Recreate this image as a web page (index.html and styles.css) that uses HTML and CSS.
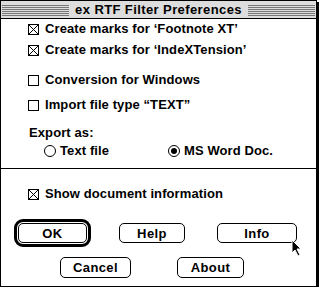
FILE: index.html
```html
<!DOCTYPE html>
<html lang="en">
<head>
    <meta charset="UTF-8">
    <title>ex RTF Filter Preferences</title>
    <link rel="stylesheet" href="styles.css">
</head>
<body>
    <div class="window">
        <!-- title bar -->
        <div class="titlebar">
            <span class="stripes"></span>
            <span class="title">ex RTF Filter Preferences</span>
            <span class="stripes"></span>
        </div>

        <!-- options -->
        <div class="options">
            <div class="row r1">
                <svg class="box" width="11" height="11" viewBox="0 0 11 11"><rect x="0.5" y="0.5" width="10" height="10" fill="#fff" stroke="#000"/><path d="M1 1L10 10M10 1L1 10" stroke="#000" stroke-width="1"/></svg>
                <span>Create marks for ‘Footnote XT’</span>
            </div>
            <div class="row r2">
                <svg class="box" width="11" height="11" viewBox="0 0 11 11"><rect x="0.5" y="0.5" width="10" height="10" fill="#fff" stroke="#000"/><path d="M1 1L10 10M10 1L1 10" stroke="#000" stroke-width="1"/></svg>
                <span>Create marks for ‘IndeXTension’</span>
            </div>
            <div class="row r3">
                <svg class="box" width="11" height="11" viewBox="0 0 11 11"><rect x="0.5" y="0.5" width="10" height="10" fill="#fff" stroke="#000"/></svg>
                <span>Conversion for Windows</span>
            </div>
            <div class="row r4">
                <svg class="box" width="11" height="11" viewBox="0 0 11 11"><rect x="0.5" y="0.5" width="10" height="10" fill="#fff" stroke="#000"/></svg>
                <span>Import file type “TEXT”</span>
            </div>
            <div class="row export">Export as:</div>
            <div class="row radios">
                <div class="radio first">
                    <svg width="12" height="12" viewBox="0 0 12 12"><circle cx="6" cy="6" r="5.5" fill="#fff" stroke="#000"/></svg>
                    <span>Text file</span>
                </div>
                <div class="radio">
                    <svg width="12" height="12" viewBox="0 0 12 12"><circle cx="6" cy="6" r="5.5" fill="#fff" stroke="#000"/><circle cx="6" cy="6" r="3" fill="#000"/></svg>
                    <span>MS Word Doc.</span>
                </div>
            </div>
        </div>

        <!-- lower part -->
        <div class="lower">
            <div class="row show">
                <svg class="box" width="11" height="11" viewBox="0 0 11 11"><rect x="0.5" y="0.5" width="10" height="10" fill="#fff" stroke="#000"/><path d="M1 1L10 10M10 1L1 10" stroke="#000" stroke-width="1"/></svg>
                <span>Show document information</span>
            </div>
            <div class="buttons top">
                <span class="default"><button class="btn ok">OK</button></span>
                <button class="btn help">Help</button>
                <button class="btn info">Info</button>
            </div>
            <div class="buttons bottom">
                <button class="btn cancel">Cancel</button>
                <button class="btn about">About</button>
            </div>
        </div>

        <!-- mouse pointer -->
        <svg class="cursor" width="12" height="18" viewBox="0 0 12 18"><path d="M1 1V14L4 11L7 17L9 16L6 10H10Z" fill="#000" stroke="#fff" stroke-width="1" stroke-linejoin="miter"/></svg>
    </div>
</body>
</html>
```

FILE: styles.css
```css
* {
    box-sizing: border-box;
    margin: 0;
    padding: 0;
}

body {
    background: #fff;
    font-family: 'Liberation Sans', Arial, sans-serif;
    font-weight: bold;
    font-size: 13px;
    letter-spacing: 0.1px;
    color: #000;
}

.window {
    position: relative;
    width: 317px;
    height: 287px;
    border: 1px solid #000;
    box-shadow: 2px 2px 0 #000;
    background: #fff;
}

/* title bar */
.titlebar {
    display: flex;
    align-items: center;
    height: 18px;
    padding: 0 1px;
    background: #ddd;
    border-bottom: 1px solid #000;
}

.stripes {
    flex: 1;
    height: 11px;
    margin-top: 1px;
    background: repeating-linear-gradient(to bottom, #777 0, #777 1px, #ddd 1px, #ddd 2px);
}

.title {
    padding: 0 6px;
    letter-spacing: 0.4px;
    line-height: 17px;
}

/* rows */
.row {
    display: flex;
    align-items: center;
    height: 16px;
    line-height: 16px;
    white-space: nowrap;
}

.row .box {
    margin-right: 6px;
}

.options {
    padding: 2px 0 9px 27px;
}

.r2 { margin-top: 5px; }
.r3 { margin-top: 14px; }
.r4 { margin-top: 9px; }

.export {
    margin-top: 12px;
    padding-left: 1px;
}

.radios {
    margin-top: 2px;
    padding-left: 16px;
}

.radio {
    display: flex;
    align-items: center;
    gap: 4px;
}

.radio.first {
    width: 124px;
}

.lower {
    border-top: 1px solid #000;
    padding-top: 17px;
}

.show {
    padding-left: 27px;
}

/* buttons */
.buttons {
    display: flex;
    align-items: center;
}

.buttons.top {
    margin-top: 17px;
    padding-left: 13px;
}

.buttons.bottom {
    margin-top: 10px;
    padding-left: 59px;
}

.btn {
    height: 20px;
    border: 1px solid #000;
    border-radius: 5px;
    background: #fff;
    font: inherit;
    color: #000;
    letter-spacing: 0.4px;
}

.default {
    display: inline-flex;
    padding: 1px;
    border: 3px solid #000;
    border-radius: 9px;
}

.ok { width: 69px; }
.help { width: 66px; margin-left: 28px; }
.info { width: 80px; margin-left: 32px; }
.cancel { width: 71px; height: 21px; }
.about { width: 67px; height: 21px; margin-left: 46px; }

.cursor {
    position: absolute;
    left: 290px;
    top: 238px;
}
```
